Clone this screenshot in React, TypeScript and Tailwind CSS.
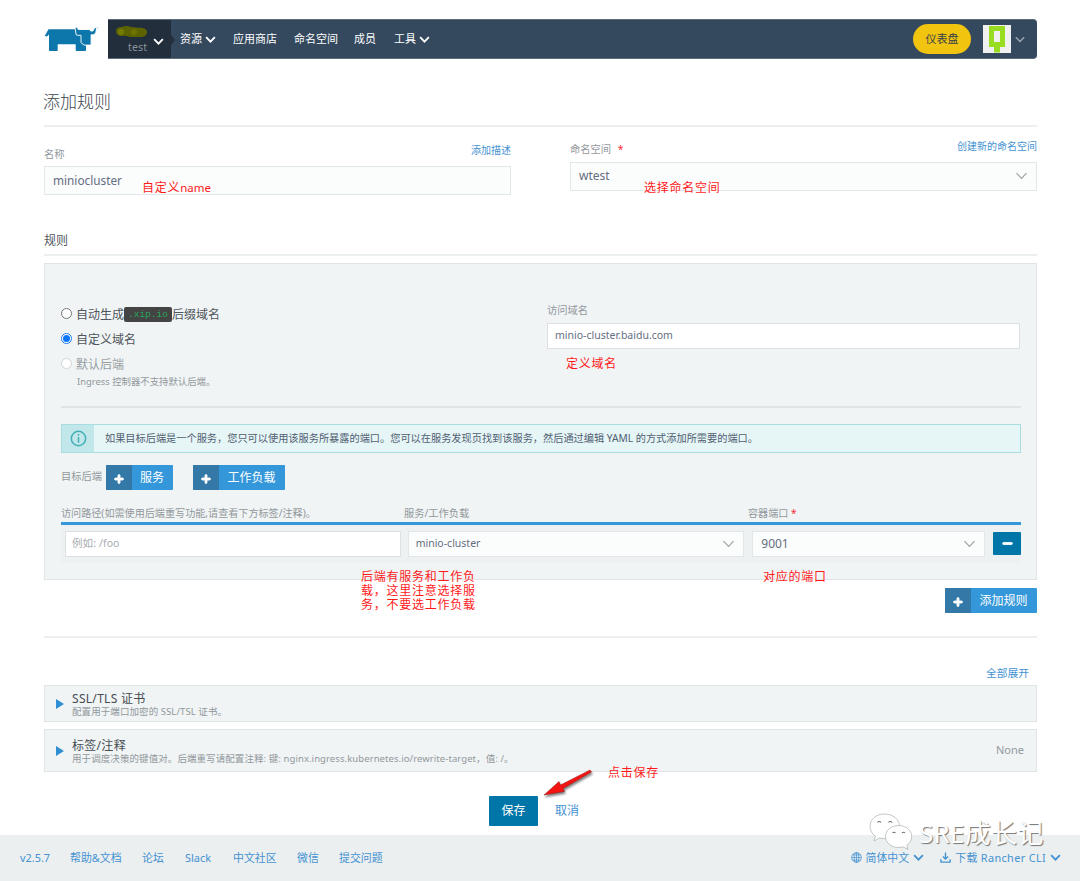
import React from "react";
import { FaPlus, FaMinus } from "react-icons/fa";

interface ChevronProps {
  className?: string;
  thick?: boolean;
}

const Chevron: React.FC<ChevronProps> = ({ className = "", thick }) => (
  <svg
    viewBox="0 0 12 8"
    className={`shrink-0 ${className}`}
    fill="none"
    stroke="currentColor"
    strokeWidth={thick ? 2.1 : 1.1}
  >
    <path d="M1 1.2 6 6.4 11 1.2" />
  </svg>
);

const CowLogo = () => (
  <svg viewBox="0 0 56 28" className="w-14 h-7 shrink-0" fill="#0d77ab">
    <path d="M4.500 3.300H34l8 14v6.900c0 .5-.3.800-.8.800h-8.700c-.5 0-.8-.3-.8-.8v-5.900h-18v5.900c0 .5-.3.800-.8.800H5.800c-.5 0-.8-.3-.8-.8V8.500L2.800 10.600.7 10z" />
    <path
      d="M31 1.200h2.200l1 2.300h11.300l1.200 1.500h2.200l2-3.600 1.800.6-1 4.800-1.800 2h-2.800v9c0 .8-.5 1.300-1.300 1.300h-5.800l-3-2.500V9.300h-3.800c-.8 0-1.200-.4-1.200-1.200z"
      stroke="#fff"
      strokeWidth="0.900"
      strokeLinejoin="round"
    />
    <path d="M53.300 1.200h1v1h-1z" opacity=".5" />
  </svg>
);

const Avatar = () => (
  <svg viewBox="0 0 28 28" className="w-7 h-7 shrink-0">
    <path fill="#f0f0f0" d="M0 0h28v28H0z" />
    <path fill="#99dd22" d="M6 1h16v21h-5v5.500h-6V22H6z" />
    <path fill="#f0f0f0" d="M11 6h6v11h-6z" />
  </svg>
);

const NavItem = ({ label, arrow, className = "" }: { label: string; arrow?: boolean; className?: string }) => (
  <a className={`flex items-center text-[11px] text-white ${className}`}>
    {label}
    {arrow && <Chevron thick className="w-[11px] h-[7px] ml-[3px]" />}
  </a>
);

const Header = () => (
  <header className="flex h-10 mt-[19px] ml-11 mr-[43px]">
    <div className="w-16 shrink-0 pt-[7px]">
      <CowLogo />
    </div>
    <nav className="flex flex-1 items-stretch bg-[#34495e] rounded-r-sm border-y border-[#5d6d7e]">
      <div className="relative w-[63px] bg-[#222e3b] shrink-0">
        <svg viewBox="0 0 34 13" className="absolute left-[7px] top-[5px] w-[34px] h-[13px] blur-[0.5px]">
          <path d="M7 2q4-2 9 0l11 1q6 1 5 5-1 4-6 4H15q-5-2-8-1-6 0-6-5 0-4 6-4z" fill="#5c6300" />
          <circle cx="6" cy="7" r="3" fill="#757a00" />
          <circle cx="19" cy="7" r="3" fill="#6d7400" />
        </svg>
        <div className="pl-5 pt-[19px] text-[10.5px] leading-4 tracking-[0.2px] text-[#8a939d]">test</div>
        <Chevron thick className="absolute left-[45px] top-[18px] w-[11px] h-[7px] text-white" />
        <span className="absolute left-[63px] top-[15px] border-y-[5px] border-l-[4px] border-y-transparent border-l-[#222e3b]" />
      </div>
      <div className="flex items-center pl-[9px] pt-px">
        <NavItem label="资源" arrow className="w-[53px]" />
        <NavItem label="应用商店" className="w-[61px]" />
        <NavItem label="命名空间" className="w-[60px]" />
        <NavItem label="成员" className="w-[40px]" />
        <NavItem label="工具" arrow />
      </div>
      <div className="flex items-center ml-auto pr-3">
        <button className="w-[58px] h-[30px] rounded-full bg-[#f1c40f] text-[11px] text-[#34404a]">仪表盘</button>
        <div className="ml-3">
          <Avatar />
        </div>
        <Chevron className="w-[10px] h-[7px] ml-1 text-[#9da8b3] stroke-[1.6]" />
      </div>
    </nav>
  </header>
);

const IconButton = ({ label, className = "" }: { label: string; className?: string }) => (
  <button className={`flex h-[25px] rounded-[1px] overflow-hidden text-xs text-white bg-[#3497da] shrink-0 ${className}`}>
    <span className="flex w-[26px] h-full items-center justify-center bg-[#3478a8] pt-0.5">
      <FaPlus className="w-2.5 h-2.5 stroke-white stroke-[50]" />
    </span>
    <span className="flex-1 h-full leading-[25px] text-center pr-px">{label}</span>
  </button>
);

interface RadioProps {
  checked?: boolean;
  disabled?: boolean;
  children: React.ReactNode;
}

const Radio: React.FC<RadioProps> = ({ checked, disabled, children }) => {
  const ring = checked ? "border-[#1b7bff]" : disabled ? "border-[#d2d5d6]" : "border-[#767676]";
  return (
    <div className={`flex h-[25px] items-center text-xs ${disabled ? "text-[#989ea2]" : "text-[#4f555b]"}`}>
      <span className={`flex w-[11px] h-[11px] mr-1 mb-0.5 items-center justify-center rounded-full border bg-white ${ring}`}>
        {checked && <span className="w-[7px] h-[7px] rounded-full bg-[#0a75ff]" />}
      </span>
      {children}
    </div>
  );
};

const SelectBox = ({ value, className = "" }: { value: string; className?: string }) => (
  <div className={`flex items-center justify-between border border-[#e2e7e9] bg-[#fbfcfc] text-[#646e82] ${className}`}>
    <span>{value}</span>
    <Chevron className="w-[13px] h-[8px] mr-2 text-[#999fa3]" />
  </div>
);

const Note = ({ className = "", children }: { className?: string; children: React.ReactNode }) => (
  <div className={`absolute text-xs leading-[14px] tracking-[0.75px] text-[#ff1a1a] whitespace-nowrap ${className}`}>
    {children}
  </div>
);

interface AccordionRowProps {
  title: string;
  detail: string;
  status?: string;
  className?: string;
}

const AccordionRow: React.FC<AccordionRowProps> = ({ title, detail, status, className = "" }) => (
  <div className={`flex items-center border border-[#dfe5e7] bg-[#f0f4f5] ${className}`}>
    <span className="ml-[11px] mr-2 border-y-[5px] border-l-[8px] border-y-transparent border-l-[#2f8fd3]" />
    <div className="flex-1 pt-0.5">
      <div className="text-xs leading-[14px] tracking-[0.3px] text-[#464c52]">{title}</div>
      <div className="text-[9.5px] leading-3 tracking-[0.08px] text-[#92989c]">{detail}</div>
    </div>
    {status && <span className="text-[11px] mr-3 text-[#92989c]">{status}</span>}
  </div>
);

const WeChatMark = () => (
  <svg viewBox="0 0 44 38" className="w-11 h-[38px]" fill="#fff" stroke="#a9adae" strokeWidth="0.7">
    <path d="M15.500 1C7 1 1 6.500 1 13.500c0 4 2.100 7.400 5.400 9.700L5 28l5.600-3c1.800.5 3.400.6 5.200.6 8.400 0 14.700-5.400 14.700-12.300S24 1 15.500 1z" />
    <path d="M29.500 12.500c-7.500 0-13 5-13 11s5.500 11 13 11c1.600 0 3.200-.2 4.600-.7l4.900 2.700-1.200-4.200c3-2 4.900-5.200 4.900-8.800 0-6-5.700-11-13.200-11z" />
    <g fill="none" stroke="#6f7475" strokeWidth="1.100">
      <path d="M8.500 9.500a2 2 0 0 1 3.500 0M19.500 9.500a2 2 0 0 1 3.500 0M23.500 20a2 2 0 0 1 3 0M33 20a2 2 0 0 1 3 0" />
    </g>
  </svg>
);

const Globe = () => (
  <svg viewBox="0 0 12 12" className="w-[11px] h-[11px]" fill="none" stroke="currentColor" strokeWidth="0.800">
    <circle cx="6" cy="6" r="5.300" />
    <ellipse cx="6" cy="6" rx="2.500" ry="5.300" />
    <path d="M.7 6h10.600M6 .7v10.600M1.500 3.200h9M1.500 8.800h9" />
  </svg>
);

const Download = () => (
  <svg viewBox="0 0 12 12" className="w-[11px] h-[11px]" fill="none" stroke="currentColor" strokeWidth="1.500">
    <path d="M6 .5v7M3.200 5 6 7.800 8.800 5M1 8v3h10V8" />
  </svg>
);

const Footer = () => (
  <footer className="flex h-[46px] items-center bg-[#ebeff0] pl-5 pr-[19px] text-[10.9px] text-[#4492d1]">
    <a className="w-[50px]">v2.5.7</a>
    <a className="w-[72px]">帮助&amp;文档</a>
    <a className="w-[43px]">论坛</a>
    <a className="w-[48px]">Slack</a>
    <a className="w-[64px]">中文社区</a>
    <a className="w-[42px]">微信</a>
    <a>提交问题</a>
    <div className="flex items-center ml-auto">
      <Globe />
      <span className="ml-1 mr-1">简体中文</span>
      <Chevron thick className="w-[11px] h-[7px]" />
      <span className="ml-4 flex items-center">
        <Download />
        <span className="ml-1 mr-1 tracking-[0.35px]">下载 Rancher CLI</span>
      </span>
      <Chevron thick className="w-[11px] h-[7px]" />
    </div>
  </footer>
);

export default function App() {
  return (
    <div className="relative w-[1080px] h-[881px] overflow-hidden flex flex-col bg-white font-['Noto_Sans','Noto_Sans_CJK_SC',sans-serif]">
      <Header />

      <main className="flex flex-col flex-1 ml-11 mr-[43px]">
        <h1 className="h-[68px] -indent-px pt-[31px] text-[17px] leading-6 font-light text-[#3c444e] border-b-2 border-[#eceff0]">添加规则</h1>

        <section className="flex justify-between h-[104px] text-[10px] leading-4">
          <div className="w-[467px] pt-[15px]">
            <div className="flex justify-between">
              <label className="pt-1 text-[10.25px] text-[#92989c]">名称</label>
              <a className="text-[#4492d1]">添加描述</a>
            </div>
            <div className="h-[29px] mt-[4px] pl-2 border border-[#e2e7e9] bg-[#fbfcfc] text-[11.8px] leading-[27px] text-[#646e82]">
              miniocluster
            </div>
          </div>
          <div className="w-[467px] pt-[11px]">
            <div className="flex justify-between">
              <label className="pt-[3px] text-[10.25px] text-[#92989c]">
                命名空间 <span className="ml-1 text-red-500">*</span>
              </label>
              <a className="text-[#4492d1]">创建新的命名空间</a>
            </div>
            <SelectBox value="wtest" className="h-[29px] mt-[5px] pl-2 pb-0.5 text-[12px]" />
          </div>
        </section>

        <h2 className="h-[25px] text-xs leading-5 text-[#4f555b] border-b-2 border-[#eceff0]">规则</h2>

        <section className="h-[317px] mt-[7px] pl-4 pr-[15px] border border-[#dfe5e7] bg-[#f0f4f5]">
          <div className="flex justify-between h-[144px] pr-px border-b-2 border-[#dfe5e7]">
            <div className="pt-[38px]">
              <Radio>
                自动生成
                <code className="h-[15px] px-[4px] rounded-[2px] bg-[#444] font-['Liberation_Mono',monospace] text-[9.5px] leading-4 text-[#27a65b]">
                  .xip.io
                </code>
                后缀域名
              </Radio>
              <Radio checked>自定义域名</Radio>
              <Radio disabled>默认后端</Radio>
              <p className="pl-4 -mt-[3px] text-[9.4px] leading-4 text-[#92989c]">Ingress 控制器不支持默认后端。</p>
            </div>
            <div className="w-[473px] pt-[38px]">
              <label className="block text-[10.25px] leading-4 text-[#92989c]">访问域名</label>
              <div className="h-[26px] mt-[5px] pl-[7px] border border-[#dce1e3] bg-white text-[10.5px] leading-[23px] text-[#646e82]">
                minio-cluster.baidu.com
              </div>
            </div>
          </div>

          <div className="flex h-[29px] mt-4 border border-[#a9dde0] bg-[#e6f5f6] text-[10.2px] leading-[26px] text-[#505e72]">
            <span className="flex w-8 items-center justify-center bg-[#c1e7ea]">
              <svg viewBox="0 0 18 18" className="w-[17px] h-[17px]" fill="none" stroke="#43b0b8" strokeWidth="1.600">
                <circle cx="9" cy="9" r="7.600" />
                <path d="M9 7.500v6M9 4.300v1.700" />
              </svg>
            </span>
            <span className="ml-[11px]">
              如果目标后端是一个服务，您只可以使用该服务所暴露的端口。您可以在服务发现页找到该服务，然后通过编辑 YAML 的方式添加所需要的端口。
            </span>
          </div>

          <div className="flex items-center mt-3 text-[10.25px] text-[#92989c]">
            <span className="w-[45px] pb-0.5">目标后端</span>
            <IconButton label="服务" className="w-[67px] mr-5" />
            <IconButton label="工作负载" className="w-[92px]" />
          </div>

          <div className="flex h-[35px] pt-[15px] text-[10.1px] leading-4 text-[#92989c] border-b-[3px] border-[#3497da]">
            <span className="w-[343px]">访问路径(如需使用后端重写功能,请查看下方标签/注释)。</span>
            <span className="w-[344px] text-[10.25px]">服务/工作负载</span>
            <span>
              容器端口 <span className="text-red-500">*</span>
            </span>
          </div>
          <div className="flex h-[38px] pt-[6px] pl-1 bg-[#eef1f2] text-[10.5px]">
            <div className="w-[336px] h-[26px] mr-[7px] pl-[6px] border border-[#dce1e3] bg-white leading-[23px] tracking-[0.1px] text-[#a8adb0]">
              例如: /foo
            </div>
            <SelectBox value="minio-cluster" className="w-[337px] h-[26px] mr-2 pl-[7px]" />
            <SelectBox value="9001" className="w-[233px] h-[26px] mr-2 pl-2 text-[12px]" />
            <button className="flex w-7 h-[23px] mt-px items-center justify-center rounded-[1px] bg-[#0075a8] text-white">
              <FaMinus className="w-[11px] h-[11px] stroke-white stroke-[40]" />
            </button>
          </div>
        </section>

        <IconButton label="添加规则" className="w-[92px] mt-2 self-end" />
        <hr className="mt-[23px] border-t-2 border-[#eceff0]" />

        <a className="self-end mt-[27px] mr-2 text-[10.75px] leading-4 text-[#4492d1]">全部展开</a>
        <AccordionRow title="SSL/TLS 证书" detail="配置用于端口加密的 SSL/TSL 证书。" className="h-[37px] mt-1 shrink-0" />
        <AccordionRow
          title="标签/注释"
          detail="用于调度决策的键值对。后端重写请配置注释: 键: nginx.ingress.kubernetes.io/rewrite-target，值: /。"
          status="None"
          className="h-[43px] mt-[7px] shrink-0"
        />

        <div className="flex items-center mt-6 pl-[445px] text-xs">
          <button className="w-[49px] h-[30px] rounded-[1px] bg-[#0075a8] text-white">保存</button>
          <a className="ml-[17px] text-[#4492d1]">取消</a>
        </div>
      </main>

      <Footer />

      <Note className="left-[142px] top-[181px]">
        自定义<span className="text-[11.5px] tracking-normal">name</span>
      </Note>
      <Note className="left-[644px] top-[181px]">选择命名空间</Note>
      <Note className="left-[566px] top-[357px]">定义域名</Note>
      <Note className="left-[361px] top-[570px]">
        后端有服务和工作负
        <br />
        载，这里注意选择服
        <br />
        务，不要选工作负载
      </Note>
      <Note className="left-[763px] top-[570px]">对应的端口</Note>
      <Note className="left-[608px] top-[766px]">点击保存</Note>

      <svg viewBox="0 0 52 32" className="absolute left-[542px] top-[767px] w-[52px] h-8 drop-shadow-[1px_2px_1px_rgba(0,0,0,0.5)]">
        <path d="M2 28 17 14.500 18.500 18 48 3 49.500 5 21 21.500 22.500 24.500z" fill="#f51414" stroke="#8e1b1b" strokeWidth="0.500" />
      </svg>

      <div className="absolute left-[869px] top-[813px] flex items-start">
        <WeChatMark />
        <span className="ml-1.5 text-[26px] leading-[40px] tracking-[0.3px] text-white whitespace-nowrap [text-shadow:1px_1px_1px_#707475]">
          SRE成长记
        </span>
      </div>
    </div>
  );
}
